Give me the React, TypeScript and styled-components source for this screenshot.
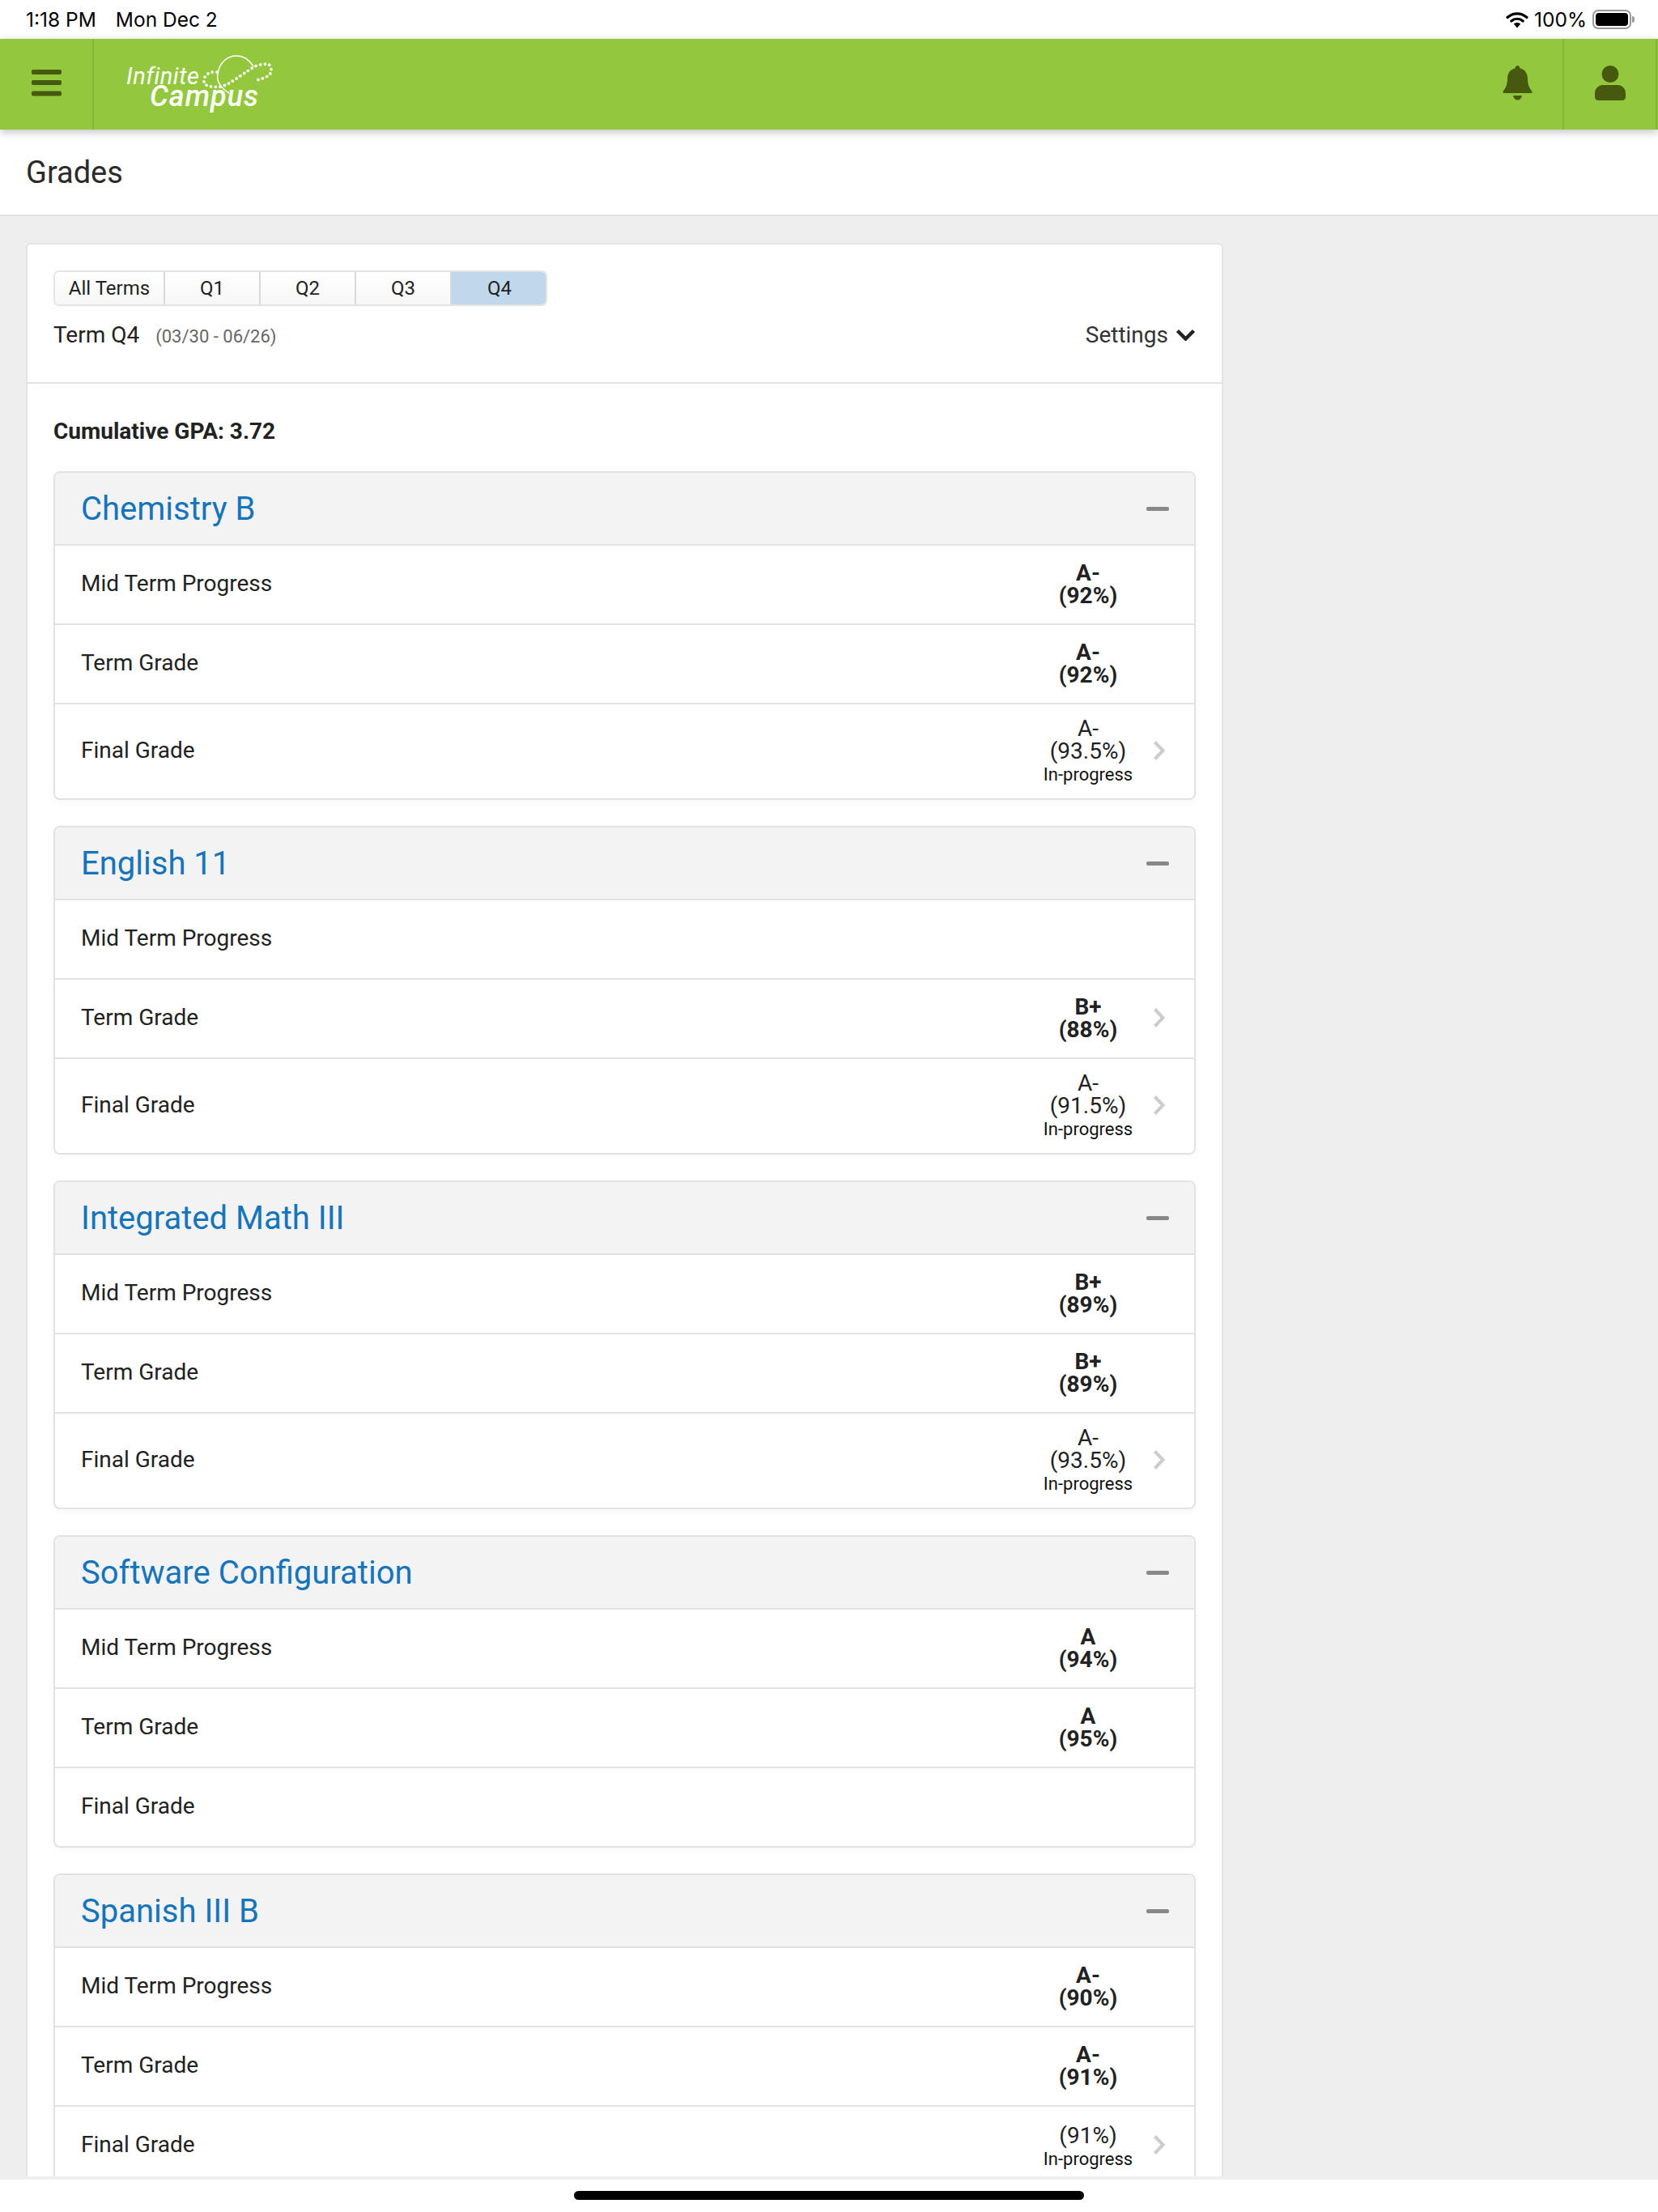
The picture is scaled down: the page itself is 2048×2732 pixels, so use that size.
import styled, { createGlobalStyle } from "styled-components";

const GlobalStyle = createGlobalStyle`
  html, body { margin: 0; padding: 0; background: #fff; }
  body { font-family: Roboto, "Liberation Sans", sans-serif; color: #222; }
  * { box-sizing: border-box; }
`;

const Screen = styled.div`
  width: 2048px;
  height: 2732px;
  display: flex;
  flex-direction: column;
  overflow: hidden;
  background: #fff;
`;

const StatusBar = styled.div`
  height: 48px;
  flex: none;
  display: flex;
  justify-content: space-between;
  align-items: center;
  padding: 0 33px 0 32px;
  font-family: Inter, Roboto, sans-serif;
  font-size: 24.5px;
  color: #000;
`;

const StatusLeft = styled.div`
  display: flex;
  gap: 24px;
`;

const StatusRight = styled.div`
  display: flex;
  align-items: center;
  gap: 7px;
`;

const TopBar = styled.header`
  height: 112px;
  flex: none;
  display: flex;
  align-items: stretch;
  padding-right: 1px;
  background: #93c83e;
  box-shadow: 0 3px 10px rgba(0, 0, 0, 0.25);
  position: relative;
  z-index: 2;
`;

const MenuCell = styled.div`
  width: 116px;
  display: flex;
  align-items: center;
  padding: 0 0 4px 39px;
  border-right: 2px solid #84b738;
`;

const LogoCell = styled.div`
  flex: 1;
  padding: 16px 0 0 38px;
`;

const IconCell = styled.div<{ $wide?: boolean }>`
  width: ${(p) => (p.$wide ? "115px" : "114px")};
  display: flex;
  align-items: center;
  justify-content: center;
  padding-bottom: 4px;
  border-right: 2px solid #84b738;
`;

const TitleBar = styled.div`
  height: 107px;
  flex: none;
  display: flex;
  align-items: center;
  padding-left: 32px;
  background: #fff;
  border-bottom: 2px solid #e2e2e2;
`;

const PageTitle = styled.h1`
  margin: 0;
  font-size: 38px;
  font-weight: 400;
  color: #2b2b2b;
`;

const Content = styled.main`
  flex: 1;
  min-height: 0;
  overflow: hidden;
  background: #eee;
  padding: 33px 0 0 32px;
`;

const Panel = styled.section`
  width: 1479px;
  background: #fff;
  border: 2px solid #e4e4e4;
  border-bottom: none;
  border-radius: 6px 6px 0 0;
`;

const PanelHead = styled.div`
  height: 172px;
  padding: 32px 32px 0;
  border-bottom: 2px solid #e2e2e2;
`;

const Tabs = styled.div`
  display: flex;
  width: 610px;
  height: 44px;
  border: 2px solid #e4e4e4;
  border-radius: 7px;
  overflow: hidden;
`;

const Tab = styled.div<{ $active?: boolean; $wide?: boolean }>`
  width: ${(p) => (p.$wide ? "136px" : "118px")};
  flex: none;
  display: flex;
  align-items: center;
  justify-content: center;
  font-size: 24px;
  color: #222;
  background: ${(p) =>
    p.$active ? "#c1d8ec" : "linear-gradient(#fff, #f7f7f7)"};
  border-right: ${(p) => (p.$active ? "none" : "2px solid #d9d9d9")};
`;

const TermRow = styled.div`
  display: flex;
  justify-content: space-between;
  align-items: center;
  margin-top: 19px;
`;

const TermInfo = styled.div`
  display: flex;
  align-items: baseline;
  gap: 20px;
  font-size: 28px;
`;

const TermDates = styled.span`
  font-size: 22px;
  color: #666;
`;

const Settings = styled.div`
  display: flex;
  align-items: center;
  gap: 9px;
  font-size: 28px;
  color: #333;
`;

const PanelBody = styled.div`
  padding: 43px 32px 0;
`;

const Gpa = styled.div`
  font-size: 28px;
  font-weight: 700;
  line-height: 32px;
  margin-bottom: 33px;
  color: #222;
`;

const Course = styled.article`
  border: 2px solid #e2e2e2;
  border-radius: 8px;
  margin-bottom: 32px;
  overflow: hidden;
  box-shadow: 0 2px 8px rgba(0, 0, 0, 0.04);
`;

const CourseHead = styled.div`
  height: 88px;
  display: flex;
  align-items: center;
  justify-content: space-between;
  padding: 0 31px 0 32px;
  background: #f3f3f3;
`;

const CourseName = styled.h2`
  margin: 0;
  font-size: 40px;
  font-weight: 400;
  color: #1674bb;
`;

const Collapse = styled.div`
  width: 28px;
  height: 5px;
  border-radius: 2px;
  background: #888;
`;

const Row = styled.div<{ $tall?: boolean }>`
  height: ${(p) => (p.$tall ? "118px" : "98px")};
  display: grid;
  grid-template-columns: 1fr 154px 54px;
  align-items: center;
  padding-left: 32px;
  border-top: 2px solid #e2e2e2;
`;

const RowLabel = styled.div`
  font-size: 28px;
  padding-bottom: 3px;
  color: #222;
`;

const Grade = styled.div<{ $noLetter?: boolean }>`
  text-align: center;
  padding-top: ${(p) => (p.$noLetter ? "4px" : "0")};
`;

const GradeValue = styled.div<{ $final?: boolean }>`
  font-size: 28px;
  line-height: 28px;
  font-weight: ${(p) => (p.$final ? 400 : 700)};
  color: #222;
`;

const GradeNote = styled.div`
  font-size: 22px;
  line-height: 29px;
  color: #111;
`;

const ChevronCell = styled.div`
  padding: 0 0 3px 3px;
  display: flex;
`;

const HomeStrip = styled.div`
  height: 44px;
  flex: none;
  display: flex;
  justify-content: center;
  padding-top: 14px;
  border-top: 4px solid #efefef;
  background: #fff;
`;

const HomeBar = styled.div`
  width: 630px;
  height: 11px;
  border-radius: 6px;
  background: #000;
`;

const BatteryShell = styled.div`
  width: 48px;
  height: 24px;
  border: 2px solid #999;
  border-radius: 7px;
  padding: 2px;
  position: relative;
  &::after {
    content: "";
    position: absolute;
    right: -6px;
    top: 6px;
    width: 3px;
    height: 8px;
    border-radius: 0 3px 3px 0;
    background: #999;
  }
`;

const BatteryFill = styled.div`
  height: 100%;
  border-radius: 4px;
  background: #000;
`;

const ICON = "#47590f";

function Hamburger() {
  return (
    <svg width="37" height="33" viewBox="0 0 37 33">
      <rect x="0" y="0" width="37" height="6" rx="2" fill={ICON} />
      <rect x="0" y="13" width="37" height="6" rx="2" fill={ICON} />
      <rect x="0" y="26.5" width="37" height="6" rx="2" fill={ICON} />
    </svg>
  );
}

function Logo() {
  return (
    <svg width="190" height="76" viewBox="0 0 190 76">
      <path
        d="M129 51C118 44 113 36 115 27 117 13 127 5 138 5c9 0 16 5 21 13"
        fill="none"
        stroke="#fff"
        strokeWidth="1.5"
      />
      <path
        d="M114 25C107 24 98 27 98 36c0 7 10 8 21 7 9-2 23-13 40-24 5-3 13-4 17-4 5 1 5 6 5 8 0 5-5 9-18 12"
        fill="none"
        stroke="#fff"
        strokeWidth="3.6"
        strokeLinecap="round"
        strokeDasharray="0.1 5.6"
      />
      <text
        x="2"
        y="40"
        fontFamily="Roboto, sans-serif"
        fontStyle="italic"
        fontSize="29"
        letterSpacing="0.5"
        fill="#fff"
      >
        Infinite
      </text>
      <text
        x="31"
        y="67"
        fontFamily="Roboto, sans-serif"
        fontStyle="italic"
        fontWeight="500"
        fontSize="36"
        letterSpacing="1"
        fill="#fff"
      >
        Campus
      </text>
    </svg>
  );
}

function Bell() {
  return (
    <svg width="37" height="43" viewBox="0 0 37 43">
      <path
        d="M18.500 0c1.800 0 2.800 1.400 2.800 3.300 6.500 1.300 9.700 6.500 9.700 13.200 0 7 2.400 11.800 5.200 15 .8 1 .4 2.500-1 2.500H1.800c-1.400 0-1.800-1.500-1-2.500 2.800-3.200 5.200-8 5.200-15 0-6.700 3.200-11.900 9.700-13.200C15.700 1.400 16.700 0 18.500 0z"
        fill={ICON}
      />
      <path d="M13 37h11c-.6 3.500-2.600 5.500-5.500 5.500S13.600 40.500 13 37z" fill={ICON} />
    </svg>
  );
}

function Person() {
  return (
    <svg width="38" height="43" viewBox="0 0 38 43">
      <circle cx="19" cy="10.500" r="10.500" fill={ICON} />
      <path
        d="M10 24h18c5.500 0 10 4.500 10 10v5c0 2.200-1.800 4-4 4H4c-2.200 0-4-1.800-4-4v-5c0-5.500 4.500-10 10-10z"
        fill={ICON}
      />
    </svg>
  );
}

function Wifi() {
  return (
    <svg width="28" height="21" viewBox="0 0 28 21">
      <path
        d="M2 7.500C9 1.200 19 1.200 26 7.500"
        fill="none"
        stroke="#000"
        strokeWidth="3.200"
        strokeLinecap="round"
      />
      <path
        d="M6.800 12C11 8.300 17 8.300 21.200 12"
        fill="none"
        stroke="#000"
        strokeWidth="3.200"
        strokeLinecap="round"
      />
      <path d="M9.800 15.500c2.500-2 5.900-2 8.400 0L14 20.500z" fill="#000" />
    </svg>
  );
}

function SettingsChevron() {
  return (
    <svg width="25" height="15" viewBox="0 0 25 15">
      <path
        d="M2.500 2.500 12.500 12.500l10-10"
        fill="none"
        stroke="#222"
        strokeWidth="4.500"
      />
    </svg>
  );
}

function RowChevron() {
  return (
    <svg width="16" height="26" viewBox="0 0 16 26">
      <path
        d="M2.500 2.500 12.500 13 2.500 23.500"
        fill="none"
        stroke="#ccc"
        strokeWidth="4"
      />
    </svg>
  );
}

type GradeRow = {
  label: string;
  letter?: string;
  pct?: string;
  note?: boolean;
  more?: boolean;
};

const mid = "Mid Term Progress";
const term = "Term Grade";
const final = "Final Grade";

const courses: { name: string; rows: GradeRow[] }[] = [
  {
    name: "Chemistry B",
    rows: [
      { label: mid, letter: "A-", pct: "(92%)" },
      { label: term, letter: "A-", pct: "(92%)" },
      { label: final, letter: "A-", pct: "(93.5%)", note: true, more: true },
    ],
  },
  {
    name: "English 11",
    rows: [
      { label: mid },
      { label: term, letter: "B+", pct: "(88%)", more: true },
      { label: final, letter: "A-", pct: "(91.5%)", note: true, more: true },
    ],
  },
  {
    name: "Integrated Math III",
    rows: [
      { label: mid, letter: "B+", pct: "(89%)" },
      { label: term, letter: "B+", pct: "(89%)" },
      { label: final, letter: "A-", pct: "(93.5%)", note: true, more: true },
    ],
  },
  {
    name: "Software Configuration",
    rows: [
      { label: mid, letter: "A", pct: "(94%)" },
      { label: term, letter: "A", pct: "(95%)" },
      { label: final },
    ],
  },
  {
    name: "Spanish III B",
    rows: [
      { label: mid, letter: "A-", pct: "(90%)" },
      { label: term, letter: "A-", pct: "(91%)" },
      { label: final, pct: "(91%)", note: true, more: true },
    ],
  },
];

const tabs = ["All Terms", "Q1", "Q2", "Q3", "Q4"];

export default function App() {
  return (
    <Screen>
      <GlobalStyle />
      <StatusBar>
        <StatusLeft>
          <span>1:18 PM</span>
          <span>Mon Dec 2</span>
        </StatusLeft>
        <StatusRight>
          <Wifi />
          <span>100%</span>
          <BatteryShell>
            <BatteryFill />
          </BatteryShell>
        </StatusRight>
      </StatusBar>

      <TopBar>
        <MenuCell>
          <Hamburger />
        </MenuCell>
        <LogoCell>
          <Logo />
        </LogoCell>
        <IconCell>
          <Bell />
        </IconCell>
        <IconCell $wide>
          <Person />
        </IconCell>
      </TopBar>

      <TitleBar>
        <PageTitle>Grades</PageTitle>
      </TitleBar>

      <Content>
        <Panel>
          <PanelHead>
            <Tabs>
              {tabs.map((t, i) => (
                <Tab key={t} $wide={i === 0} $active={t === "Q4"}>
                  {t}
                </Tab>
              ))}
            </Tabs>
            <TermRow>
              <TermInfo>
                <span>Term Q4</span>
                <TermDates>(03/30 - 06/26)</TermDates>
              </TermInfo>
              <Settings>
                Settings
                <SettingsChevron />
              </Settings>
            </TermRow>
          </PanelHead>
          <PanelBody>
            <Gpa>Cumulative GPA: 3.72</Gpa>
            {courses.map((c) => (
              <Course key={c.name}>
                <CourseHead>
                  <CourseName>{c.name}</CourseName>
                  <Collapse />
                </CourseHead>
                {c.rows.map((r) => (
                  <Row key={r.label} $tall={r.note && !!r.letter}>
                    <RowLabel>{r.label}</RowLabel>
                    <Grade $noLetter={r.note && !r.letter}>
                      {r.letter && (
                        <GradeValue $final={r.note}>{r.letter}</GradeValue>
                      )}
                      {r.pct && <GradeValue $final={r.note}>{r.pct}</GradeValue>}
                      {r.note && <GradeNote>In-progress</GradeNote>}
                    </Grade>
                    <ChevronCell>{r.more && <RowChevron />}</ChevronCell>
                  </Row>
                ))}
              </Course>
            ))}
          </PanelBody>
        </Panel>
      </Content>

      <HomeStrip>
        <HomeBar />
      </HomeStrip>
    </Screen>
  );
}
